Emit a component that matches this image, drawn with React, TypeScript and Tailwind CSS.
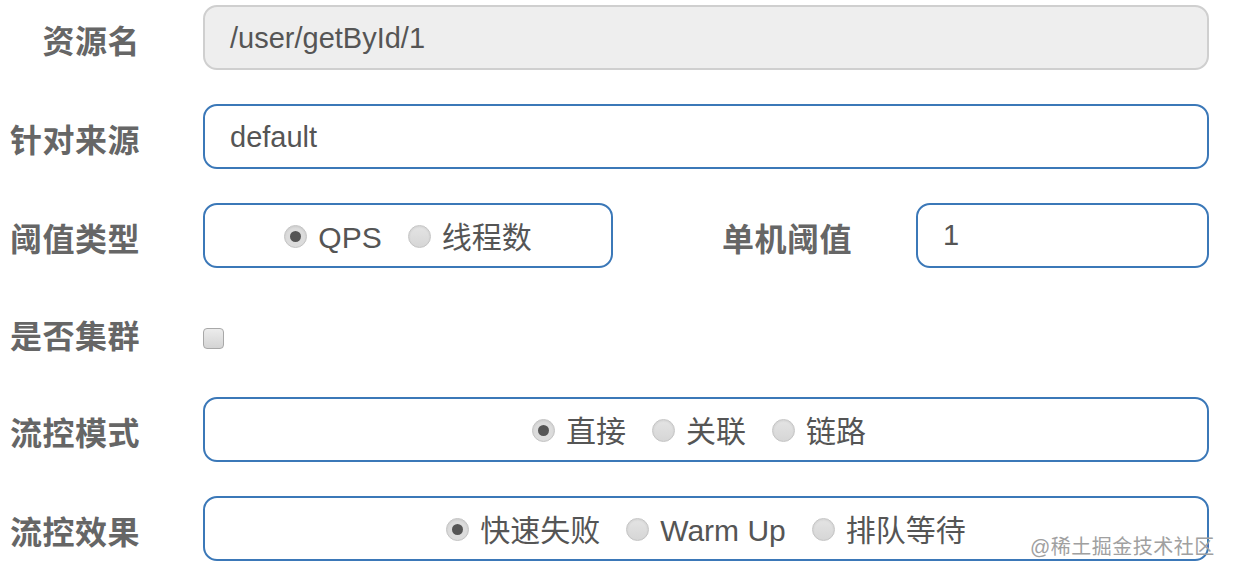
import React, { useState } from "react";

const font = "font-['Liberation_Sans','Noto_Sans_CJK_SC',sans-serif]";

const Label = ({ children }: { children: React.ReactNode }) => (
  <div className="w-[140px] shrink-0 mt-[8px] text-right text-[32px] font-bold text-[#666] tracking-[0.5px]">
    {children}
  </div>
);

interface RadioProps {
  label: string;
  checked: boolean;
  onClick: () => void;
}

const Radio = ({ label, checked, onClick }: RadioProps) => (
  <button onClick={onClick} className="flex items-center gap-[11px] cursor-pointer">
    <span
      className={`mt-[1px] flex items-center justify-center w-[23px] h-[23px] rounded-full border border-[#c4c4c4] shadow-[inset_0_1px_2px_rgba(0,0,0,0.08)] ${
        checked ? "bg-[#dcdcdc]" : "bg-gradient-to-b from-[#e4e4e4] to-[#d6d6d6]"
      }`}
    >
      {checked && <span className="w-[11px] h-[11px] rounded-full bg-[#555]" />}
    </span>
    <span className="text-[30px] text-[#555] leading-none mt-[5px]">{label}</span>
  </button>
);

const RadioGroup = ({ options, initial }: { options: string[]; initial: string }) => {
  const [value, setValue] = useState(initial);
  return (
    <div className="flex items-center justify-center gap-[26px] h-full">
      {options.map((opt) => (
        <Radio key={opt} label={opt} checked={value === opt} onClick={() => setValue(opt)} />
      ))}
    </div>
  );
};

const boxBlue = "h-[65px] rounded-[14px] border-2 border-[#3b78b8] bg-white";

export default function App() {
  const [cluster, setCluster] = useState(false);

  return (
    <div className={`relative w-[1234px] h-[572px] bg-white overflow-hidden ${font}`}>
      <div className="flex flex-col gap-[34px] pt-[5px] pr-[25px]">
        <div className="flex items-center gap-[63px]">
          <Label>资源名</Label>
          <div className="flex-1 h-[65px] rounded-[14px] border-2 border-[#cfcfcf] bg-[#eeeeee] flex items-center px-[25px] pt-[3px] text-[29px] text-[#555]">
            /user/getById/1
          </div>
        </div>

        <div className="flex items-center gap-[63px]">
          <Label>针对来源</Label>
          <div className={`flex-1 ${boxBlue} flex items-center px-[25px] pt-[3px] text-[29px] text-[#555]`}>
            default
          </div>
        </div>

        <div className="flex items-center gap-[63px]">
          <Label>阈值类型</Label>
          <div className="flex-1 flex items-center">
            <div className={`w-[410px] ${boxBlue}`}>
              <RadioGroup options={["QPS", "线程数"]} initial="QPS" />
            </div>
            <div className="flex-1 mt-[8px] text-right pr-[64px] text-[32px] font-bold text-[#666] tracking-[0.5px]">
              单机阈值
            </div>
            <div className={`w-[293px] ${boxBlue} flex items-center px-[25px] text-[29px] text-[#555]`}>
              1
            </div>
          </div>
        </div>

        <div className="flex items-center gap-[63px] h-[61px]">
          <Label>是否集群</Label>
          <button
            onClick={() => setCluster(!cluster)}
            className="mt-[11px] w-[21px] h-[21px] rounded-[4px] border border-[#a8a8a8] bg-gradient-to-b from-[#ececec] to-[#d4d4d4] flex items-center justify-center text-[14px] text-[#444] cursor-pointer"
          >
            {cluster ? "✓" : ""}
          </button>
        </div>

        <div className="flex items-center gap-[63px]">
          <Label>流控模式</Label>
          <div className={`flex-1 ${boxBlue} pr-[14px]`}>
            <RadioGroup options={["直接", "关联", "链路"]} initial="直接" />
          </div>
        </div>

        <div className="flex items-center gap-[63px]">
          <Label>流控效果</Label>
          <div className={`flex-1 ${boxBlue}`}>
            <RadioGroup options={["快速失败", "Warm Up", "排队等待"]} initial="快速失败" />
          </div>
        </div>
      </div>

      <div className="absolute left-[1030px] top-[532px] text-[20px] text-[#a0a0a0] tracking-[0.5px]">
        @稀土掘金技术社区
      </div>
    </div>
  );
}
